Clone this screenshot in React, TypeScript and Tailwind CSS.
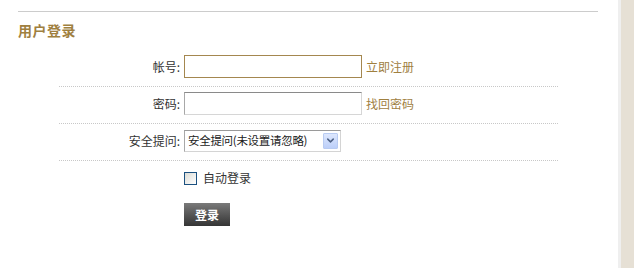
import { ChevronDown } from "lucide-react";

const font = "font-['Noto_Sans_CJK_SC','Liberation_Sans',sans-serif]";

function Row({ label, children }: { label: string; children: React.ReactNode }) {
  return (
    <div className="flex items-center border-b border-dotted border-[#c8c8c8] pt-[5px] pb-[8px]">
      <label className="w-[125px] pr-[4px] text-right text-[12px] text-[#333]">{label}:</label>
      <div className="flex h-[23px] items-center">{children}</div>
    </div>
  );
}

export default function App() {
  return (
    <div className={`flex h-[268px] w-[634px] bg-white ${font}`}>
      <main className="w-[618px] pt-[11px]">
        <div className="ml-[18px] w-[580px] border-t border-[#cccccc]" />
        <h2 className="mt-[8px] mb-[10px] ml-[18px] h-[20px] text-[14px] leading-[20px] font-bold tracking-[0.5px] text-[#a0803f]">
          用户登录
        </h2>

        <form className="ml-[59px] w-[499px]" onSubmit={(e) => e.preventDefault()}>
          <Row label="帐号">
            <input className="h-[23px] w-[178px] border border-[#a4874f] bg-white px-1 text-[12px] outline-none" />
            <a href="#" className="ml-[4px] text-[12px] text-[#a0803f]">立即注册</a>
          </Row>
          <Row label="密码">
            <input
              type="password"
              className="h-[23px] w-[178px] border border-[#d6d6d6] border-t-[#8a8a8a] border-l-[#a8a8a8] bg-white px-1 text-[12px] outline-none"
            />
            <a href="#" className="ml-[4px] text-[12px] text-[#a0803f]">找回密码</a>
          </Row>
          <Row label="安全提问">
            <div className="flex h-[22px] w-[157px] items-center gap-[2px] border border-[#d4d4d4] border-t-[#9a9a9a] border-l-[#a8a8a8] bg-white pl-[3px] pr-[2px]">
              <span className="flex-1 whitespace-nowrap text-[11.5px] leading-none tracking-[-0.3px] text-[#222]">
                安全提问(未设置请忽略)
              </span>
              <span className="flex h-[16px] w-[15px] shrink-0 items-center justify-center rounded-[1px] border border-[#b8cbf2] bg-gradient-to-b from-[#dde7fd] to-[#bccff9]">
                <ChevronDown size={11} strokeWidth={3.2} className="text-[#4d6185]" />
              </span>
            </div>
          </Row>

          <div className="mt-[8px] ml-[125px] flex items-center gap-[6px]">
            <span className="h-[13px] w-[13px] border border-[#1c5180] bg-gradient-to-br from-[#dcdcd6] to-white" />
            <span className="text-[12px] text-[#333]">自动登录</span>
          </div>

          <button
            type="submit"
            className="mt-[16px] ml-[125px] flex h-[23px] w-[46px] items-center justify-center bg-gradient-to-b from-[#7a7a7a] to-[#353535] text-[12px] font-bold text-white"
          >
            登录
          </button>
        </form>
      </main>
      <div className="w-[3px] bg-[#efefef]" />
      <div className="flex-1 bg-[#e6e0d5]" />
    </div>
  );
}
